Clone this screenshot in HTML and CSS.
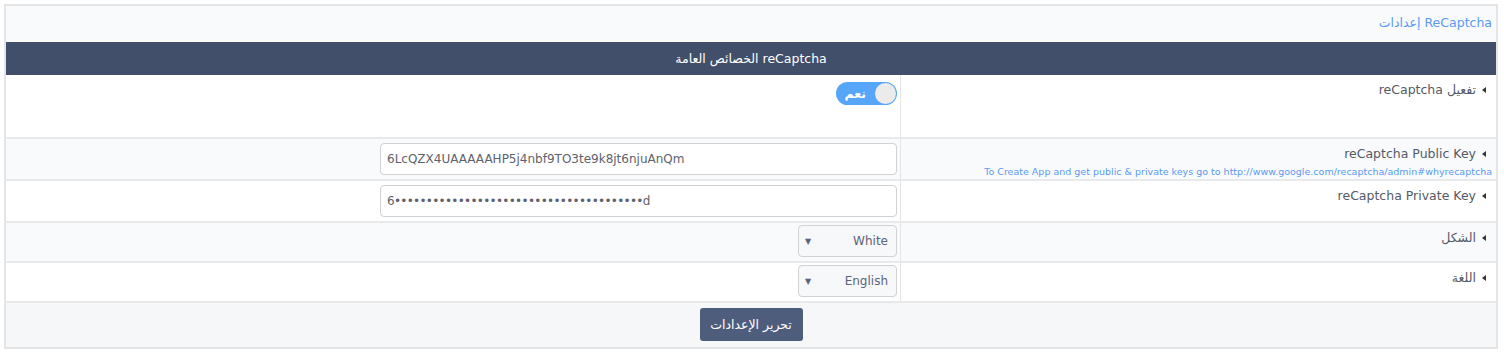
FILE: index.html
```html
<!DOCTYPE html>
<html lang="ar" dir="rtl">
<head>
    <meta charset="UTF-8">
    <title>ReCaptcha إعدادات</title>
    <link rel="stylesheet" href="styles.css">
</head>
<body>
    <div class="panel">
        <div class="panel-title"><a href="#">ReCaptcha إعدادات</a></div>
        <form class="settings">
            <table>
                <thead>
                    <tr><th colspan="2">reCaptcha الخصائص العامة</th></tr>
                </thead>
                <tbody>
                    <tr class="tall">
                        <td class="label"><span class="arrow"></span>تفعيل reCaptcha</td>
                        <td class="value">
                            <span class="toggle"><span class="knob"></span><span class="toggle-text">نعم</span></span>
                        </td>
                    </tr>
                    <tr class="alt">
                        <td class="label">
                            <span class="arrow"></span><span dir="ltr">reCaptcha Public Key</span>
                            <div class="hint" dir="ltr">To Create App and get public &amp; private keys go to http://www.google.com/recaptcha/admin#whyrecaptcha</div>
                        </td>
                        <td class="value"><input class="text" dir="ltr" type="text" value="6LcQZX4UAAAAAHP5j4nbf9TO3te9k8jt6njuAnQm"></td>
                    </tr>
                    <tr>
                        <td class="label"><span class="arrow"></span><span dir="ltr">reCaptcha Private Key</span></td>
                        <td class="value"><input class="text secret" dir="ltr" type="text" value="6•••••••••••••••••••••••••••••••••••••••d"></td>
                    </tr>
                    <tr class="alt short">
                        <td class="label"><span class="arrow"></span>الشكل</td>
                        <td class="value"><span class="select"><span class="caret">▼</span>White</span></td>
                    </tr>
                    <tr class="short">
                        <td class="label"><span class="arrow"></span>اللغة</td>
                        <td class="value"><span class="select"><span class="caret">▼</span>English</span></td>
                    </tr>
                </tbody>
            </table>
            <div class="actions">
                <button type="button" class="btn">تحرير الإعدادات</button>
            </div>
        </form>
    </div>
</body>
</html>
```

FILE: styles.css
```css
body {
    margin: 0;
    padding: 4px 6px 3px 4px;
    background: #ffffff;
    font-family: Tahoma, "DejaVu Sans", "Noto Sans", sans-serif;
    font-size: 12px;
    color: #555a66;
}
.panel {
    border: 2px solid #e4e5e7;
    background: #f9fafc;
}
.panel-title {
    height: 36px;
    line-height: 34px;
    padding: 0 4px;
    font-size: 12.5px;
}
.panel-title a {
    color: #5a9af2;
    text-decoration: none;
}
.settings table {
    width: 100%;
    border-collapse: collapse;
}
.settings th {
    height: 33px;
    background: #414f6a;
    color: #ffffff;
    font-weight: normal;
    font-size: 12.5px;
    text-align: center;
    padding: 0;
}
.settings td {
    border-bottom: 2px solid #e8e9eb;
    background: #ffffff;
    vertical-align: top;
}
.settings tr.alt td {
    background: #f9fafc;
}
.settings td.label {
    width: 577px;
    padding: 7px 10px 0 8px;
    border-left: 1px solid #e4e5e7;
    text-align: right;
    font-size: 12.5px;
    color: #555a66;
}
.settings td.value {
    padding: 4px 3px 4px 0;
}
.settings tr.short td.value {
    padding: 2px 3px 4px 0;
}
.settings tr.tall td.value {
    height: 52px;
    padding: 7px 3px 3px 0;
}
.arrow {
    display: inline-block;
    width: 0;
    height: 0;
    border-top: 3px solid transparent;
    border-bottom: 3px solid transparent;
    border-right: 4px solid #333333;
    margin-left: 6px;
    vertical-align: 1px;
}
.hint {
    text-align: right;
    font-size: 9.5px;
    color: #5a9af2;
    margin-top: 5px;
    margin-right: -6px;
}
.toggle {
    display: inline-flex;
    align-items: center;
    width: 61px;
    height: 23px;
    border-radius: 12px;
    background: #57a5f7;
    box-sizing: border-box;
    padding: 0 1px;
}
.knob {
    width: 21px;
    height: 21px;
    border-radius: 50%;
    background: #ebebeb;
}
.toggle-text {
    color: #ffffff;
    font-weight: bold;
    font-size: 12.5px;
    margin-right: 9px;
}
input.text {
    display: block;
    width: 517px;
    height: 32px;
    box-sizing: border-box;
    border: 1px solid #d0d2d6;
    border-radius: 4px;
    background: #ffffff;
    padding: 0 6px;
    font-family: Tahoma, "DejaVu Sans", "Noto Sans", sans-serif;
    font-size: 12px;
    color: #5e626b;
    text-align: left;
}
input.secret {
    letter-spacing: -0.7px;
}
.select {
    display: flex;
    align-items: center;
    justify-content: space-between;
    direction: ltr;
    width: 99px;
    height: 32px;
    box-sizing: border-box;
    border: 1px solid #d0d2d6;
    border-radius: 4px;
    background: #f7f8fa;
    padding: 0 8px 0 6px;
    font-size: 12px;
    color: #5b6478;
}
.caret {
    font-size: 8px;
    color: #5b6478;
}
.actions {
    padding: 5px 0 6px;
    text-align: center;
    background: #f6f7f9;
}
.btn {
    width: 103px;
    height: 33px;
    border: none;
    border-radius: 3px;
    background: #4f5d7c;
    color: #ffffff;
    font-family: Tahoma, "DejaVu Sans", "Noto Sans", sans-serif;
    font-size: 12.5px;
}
```
